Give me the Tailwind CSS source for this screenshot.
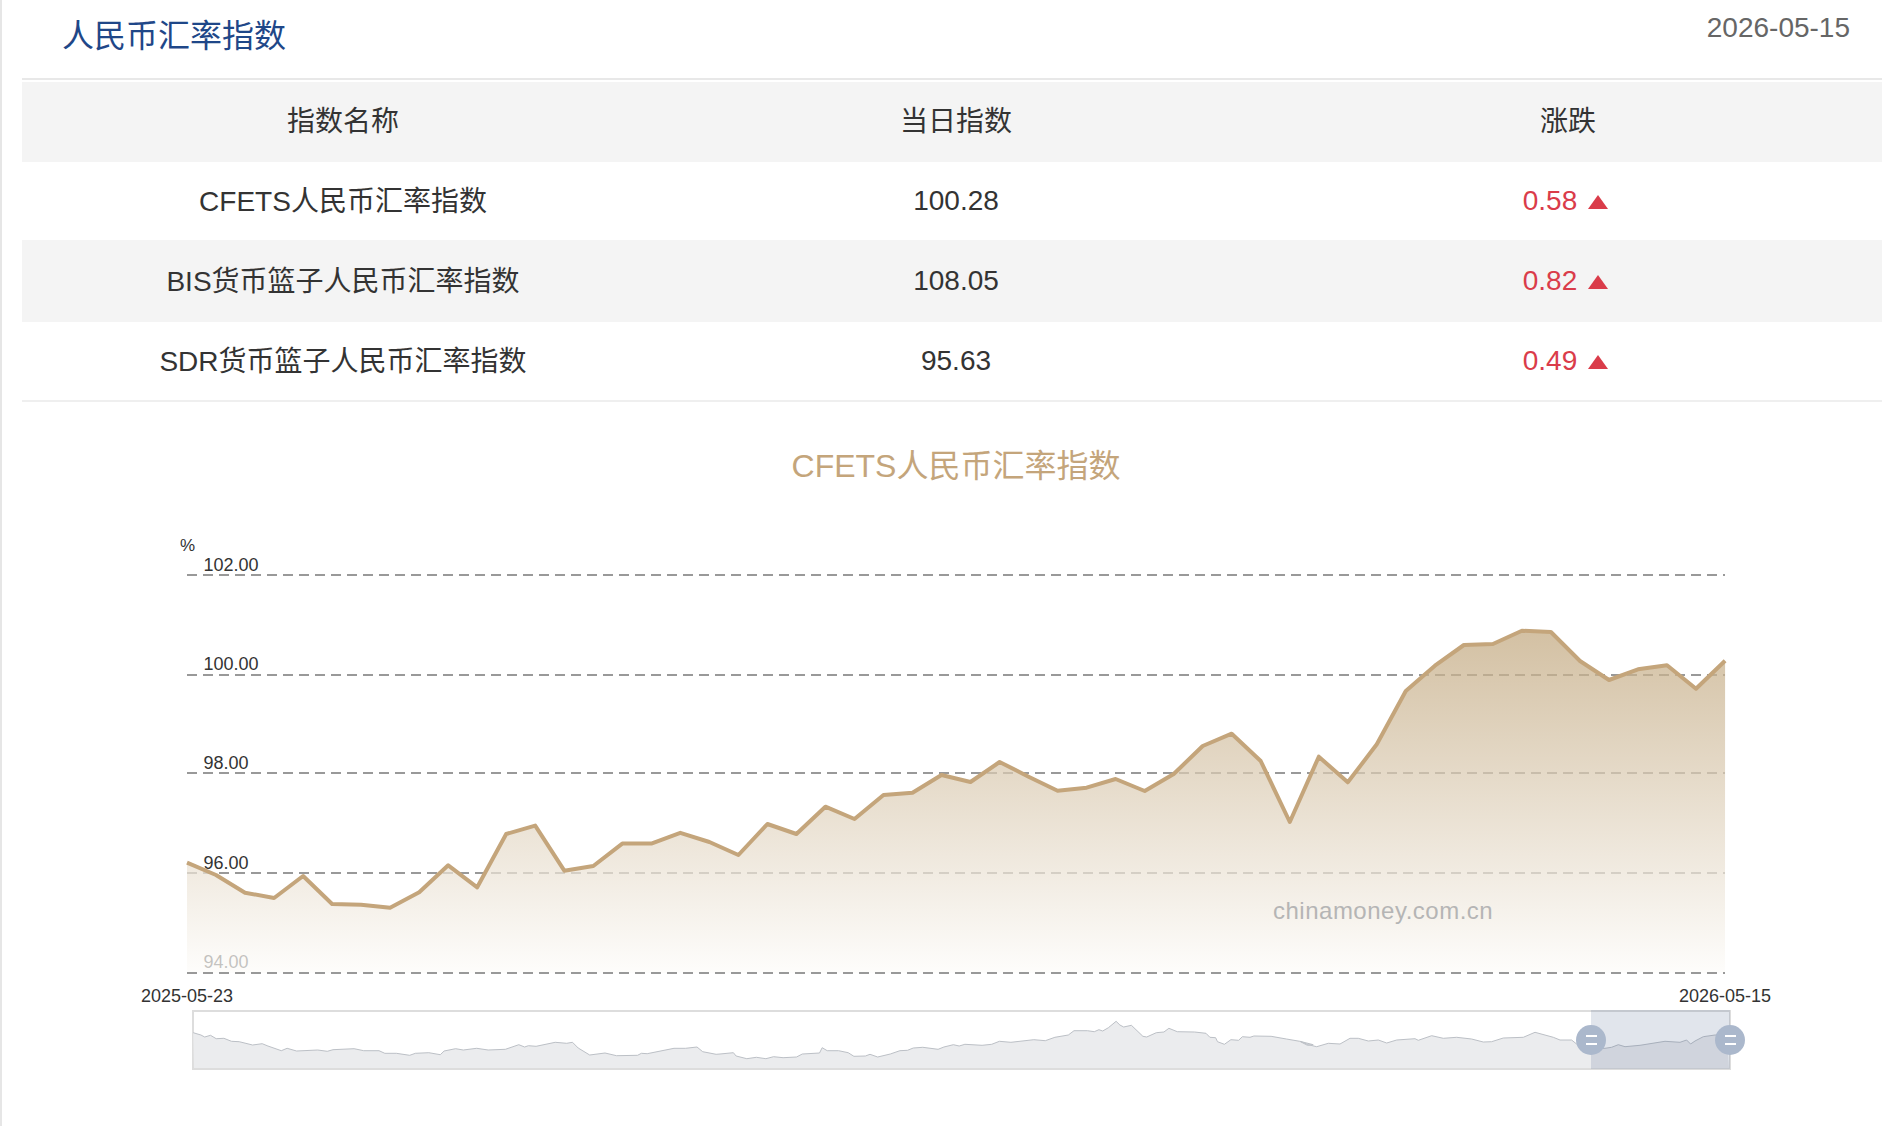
<!DOCTYPE html>
<html lang="zh-CN">
<head>
    <meta charset="UTF-8">
    <title>人民币汇率指数</title>
    <script src="https://cdn.jsdelivr.net/npm/@tailwindcss/browser@4"></script>
</head>
<body class="bg-white">
    <div class="min-h-screen w-[1882px] overflow-hidden border-l-2 border-[#e6e6e6] font-['Liberation_Sans','Noto_Sans_CJK_SC',sans-serif] text-[#333333]">
        <!-- header -->
        <div class="ml-[20px] flex h-[80px] justify-between border-b-2 border-[#e8e8e8]">
            <h2 class="pl-[40px] pt-[16px] text-[32px] leading-[40px] font-normal text-[#1f4788]">人民币汇率指数</h2>
            <span class="pr-[32px] pt-[11px] text-[28px] leading-[34px] text-[#666666]">2026-05-15</span>
        </div>

        <!-- index table -->
        <div class="ml-[20px] mt-[2px] w-[1860px] border-b-2 border-[#efefef] text-[28px] leading-[36px]">
            <div class="grid h-[80px] grid-cols-[642px_584px_634px] items-center bg-[#f4f4f4] text-center">
                <span>指数名称</span>
                <span>当日指数</span>
                <span class="pl-[6px]">涨跌</span>
            </div>
            <div class="grid h-[78px] grid-cols-[642px_584px_634px] items-center text-center">
                <span class="pt-[1px]">CFETS人民币汇率指数</span>
                <span>100.28</span>
                <span class="flex items-center justify-center gap-[11px] pl-[1px] text-[#da3c4a]">0.58
                    <svg class="mt-[1px]" width="20" height="14" viewBox="0 0 20 14"><path d="M10 0L20 14H0Z" fill="#da3c4a"/></svg>
                </span>
            </div>
            <div class="grid h-[82px] grid-cols-[642px_584px_634px] items-center bg-[#f4f4f4] text-center">
                <span class="pt-[1px]">BIS货币篮子人民币汇率指数</span>
                <span>108.05</span>
                <span class="flex items-center justify-center gap-[11px] pl-[1px] text-[#da3c4a]">0.82
                    <svg class="mt-[1px]" width="20" height="14" viewBox="0 0 20 14"><path d="M10 0L20 14H0Z" fill="#da3c4a"/></svg>
                </span>
            </div>
            <div class="grid h-[78px] grid-cols-[642px_584px_634px] items-center text-center">
                <span class="pt-[1px]">SDR货币篮子人民币汇率指数</span>
                <span>95.63</span>
                <span class="flex items-center justify-center gap-[11px] pl-[1px] text-[#da3c4a]">0.49
                    <svg class="mt-[1px]" width="20" height="14" viewBox="0 0 20 14"><path d="M10 0L20 14H0Z" fill="#da3c4a"/></svg>
                </span>
            </div>
        </div>

        <!-- chart -->
        <div class="h-[118px] w-[1908px] pt-[44px] text-center text-[32px] leading-[40px] text-[#c4a57b]">CFETS人民币汇率指数</div>
        <svg id="chart" class="block" width="1880" height="606" viewBox="2 520 1880 606" font-size="18" fill="#333333">
            <defs>
                <linearGradient id="areaFill" x1="0" y1="630" x2="0" y2="973" gradientUnits="userSpaceOnUse">
                    <stop offset="0" stop-color="#c2a87f" stop-opacity="0.72"/>
                    <stop offset="1" stop-color="#fdfcfa" stop-opacity="0.72"/>
                </linearGradient>
            </defs>

            <text x="180" y="551" font-size="17">%</text>
            <text x="203.5" y="571">102.00</text>
            <text x="203.5" y="670">100.00</text>
            <text x="203.5" y="769">98.00</text>
            <text x="203.5" y="869">96.00</text>
            <text x="203.5" y="968">94.00</text>

            <g stroke="#999999" stroke-width="2" stroke-dasharray="10 6">
                <line x1="187" y1="575" x2="1725" y2="575"/>
                <line x1="187" y1="675" x2="1725" y2="675"/>
                <line x1="187" y1="773" x2="1725" y2="773"/>
                <line x1="187" y1="873" x2="1725" y2="873"/>
            </g>

            <path id="mainArea" fill="url(#areaFill)"/>
            <line x1="187" y1="973" x2="1725" y2="973" stroke="#999999" stroke-width="2" stroke-dasharray="10 6"/>
            <path id="mainLine" fill="none" stroke="#c4a57b" stroke-width="4" stroke-linejoin="round"/>

            <text x="1273" y="919" font-size="24" letter-spacing="0.5" fill="#b5b5b5">chinamoney.com.cn</text>
            <text x="141" y="1002">2025-05-23</text>
            <text x="1679" y="1002">2026-05-15</text>

            <!-- navigator -->
            <rect x="193" y="1011" width="1537" height="58" fill="#ffffff" stroke="#dddddd" stroke-width="2"/>
            <path id="navArea" fill="#ebecee"/>
            <path id="navLine" fill="none" stroke="#bcc0c6" stroke-width="1"/>
            <rect x="1591" y="1010" width="139" height="59" fill="#335080" fill-opacity="0.15"/>
            <g fill="#abb8cc">
                <circle cx="1591" cy="1040" r="15"/>
                <circle cx="1730" cy="1040" r="15"/>
            </g>
            <g fill="#ffffff">
                <rect x="1586" y="1035" width="11" height="2"/>
                <rect x="1586" y="1043" width="11" height="2"/>
                <rect x="1725" y="1035" width="11" height="2"/>
                <rect x="1725" y="1043" width="11" height="2"/>
            </g>
        </svg>
    </div>

    <script>
        // weekly values, already in page pixels
        var ys = [862.7,875,892.7,898,876,904,904.7,907.7,892.3,865.3,887.3,834,825.6,870.7,866,843.6,843.6,832.8,842,855,824,834,806.7,819,795,792.7,775,782,762,776.7,790.7,787.7,779,791,774,746,733.7,761,822,756.7,782.3,744.3,691,665.7,645,644,630.7,632,661,680,669.3,665.3,688.7,660.7];
        var pts = ys.map(function (y, i) { return (187 + i * 29.02).toFixed(1) + ' ' + y; });
        document.getElementById('mainLine').setAttribute('d', 'M' + pts.join('L'));
        document.getElementById('mainArea').setAttribute('d', 'M' + pts.join('L') + 'L1725 973L187 973Z');

        // navigator series, one list per stretch of the bar
        var nav = [
            [130, 0.3831, [165,218,185,225,195,231,210,226,225,236,245,235,265,244,285,245,320,255,345,251,360,258,395,272,410,265,435,273,490,270,515,274,530,269,585,266,610,272,650,272,665,280,695,280,730,286,745,280,780,278,810,284,820,273,850,266,870,270,905,265,935,270,980,268,1015,254,1030,261,1040,257,1060,259,1110,247,1140,250,1155,247,1170,264,1200,285,1240,279,1270,287,1325,286,1335,280,1350,281,1420,265,1450,265,1480,261,1495,275,1530,283]],
            [720, 0.3827, [0,282,35,278,42,288,70,296,95,292,120,296,140,290,165,293,200,291,215,282,260,279,267,263,280,272,310,272,335,278,350,289,380,288,392,283,412,291,445,282,470,272,490,271,505,264,530,262,570,268,585,261,610,254,625,258,640,253,685,256,710,253,730,244,760,247,820,239,850,242,875,232,910,225,925,212,960,212,978,215,990,209,1000,213,1015,203,1035,184,1045,195,1055,201,1075,196,1105,229,1115,231,1140,218,1160,216,1173,205,1195,215,1240,216,1270,220,1280,232,1295,233,1300,245,1318,253,1335,239,1355,241,1365,230,1385,232,1395,228,1440,229,1480,237,1515,244,1535,256,1550,254]],
            [1300, 0.3333, [0,244,25,254,50,260,85,250,120,252,150,235,175,235,205,243,235,240,260,249,290,240,345,236,355,241,395,227,430,235,470,232,515,237,550,246,575,245,610,234,670,232,705,217,760,232,780,240,815,240,830,252,845,262,875,265,915,265,935,262,955,254,975,260,1020,256,1095,244,1140,247,1160,240,1172,252,1185,243,1210,230,1245,225,1280,226]]
        ];
        var navPts = [];
        nav.forEach(function (part) {
            for (var i = 0; i < part[2].length; i += 2) {
                navPts.push((part[0] + part[2][i] * part[1]).toFixed(1) + ' ' + (960 + part[2][i + 1] / 3).toFixed(1));
            }
        });
        document.getElementById('navLine').setAttribute('d', 'M' + navPts.join('L'));
        document.getElementById('navArea').setAttribute('d', 'M' + navPts.join('L') + 'L1729 1068L194 1068Z');
    </script>
</body>
</html>
